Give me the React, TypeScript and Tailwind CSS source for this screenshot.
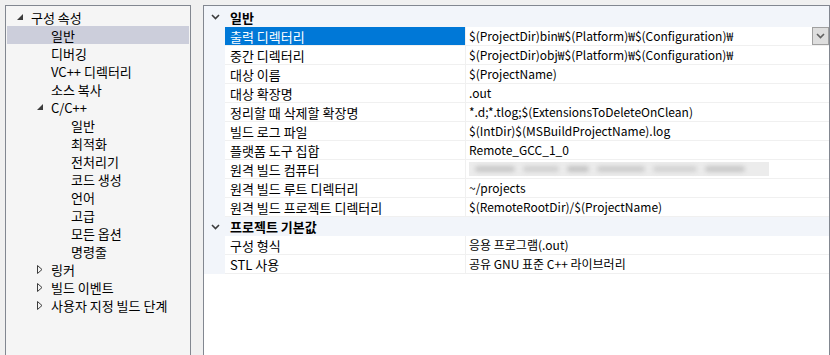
import React from "react";

const FONT = { fontFamily: '"Noto Sans CJK KR", "Noto Sans", sans-serif' };

function Expanded() {
  return (
    <svg width="6" height="6" viewBox="0 0 6 6" className="block">
      <polygon points="6,0 6,6 0,6" fill="#3c3c3c" />
    </svg>
  );
}

function Collapsed() {
  return (
    <svg width="6" height="9" viewBox="0 0 6 9" className="block">
      <polygon points="0.5,0.5 5,4.5 0.5,8.5" fill="none" stroke="#3c3c3c" strokeWidth="1" />
    </svg>
  );
}

type TreeItem = { label: string; level: number; arrow?: "open" | "closed"; selected?: boolean };

const tree: TreeItem[] = [
  { label: "구성 속성", level: 0, arrow: "open" },
  { label: "일반", level: 1, selected: true },
  { label: "디버깅", level: 1 },
  { label: "VC++ 디렉터리", level: 1 },
  { label: "소스 복사", level: 1 },
  { label: "C/C++", level: 1, arrow: "open" },
  { label: "일반", level: 2 },
  { label: "최적화", level: 2 },
  { label: "전처리기", level: 2 },
  { label: "코드 생성", level: 2 },
  { label: "언어", level: 2 },
  { label: "고급", level: 2 },
  { label: "모든 옵션", level: 2 },
  { label: "명령줄", level: 2 },
  { label: "링커", level: 1, arrow: "closed" },
  { label: "빌드 이벤트", level: 1, arrow: "closed" },
  { label: "사용자 지정 빌드 단계", level: 1, arrow: "closed" },
];

const padClass = ["pl-[6px]", "pl-[26px]", "pl-[46px]"];

type Row =
  | { kind: "header"; label: string; first?: boolean }
  | { kind: "row"; name: string; value?: string; selected?: boolean; blurred?: boolean };

const rows: Row[] = [
  { kind: "header", label: "일반", first: true },
  { kind: "row", name: "출력 디렉터리", value: "$(ProjectDir)bin₩$(Platform)₩$(Configuration)₩", selected: true },
  { kind: "row", name: "중간 디렉터리", value: "$(ProjectDir)obj₩$(Platform)₩$(Configuration)₩" },
  { kind: "row", name: "대상 이름", value: "$(ProjectName)" },
  { kind: "row", name: "대상 확장명", value: ".out" },
  { kind: "row", name: "정리할 때 삭제할 확장명", value: "*.d;*.tlog;$(ExtensionsToDeleteOnClean)" },
  { kind: "row", name: "빌드 로그 파일", value: "$(IntDir)$(MSBuildProjectName).log" },
  { kind: "row", name: "플랫폼 도구 집합", value: "Remote_GCC_1_0" },
  { kind: "row", name: "원격 빌드 컴퓨터", blurred: true },
  { kind: "row", name: "원격 빌드 루트 디렉터리", value: "~/projects" },
  { kind: "row", name: "원격 빌드 프로젝트 디렉터리", value: "$(RemoteRootDir)/$(ProjectName)" },
  { kind: "header", label: "프로젝트 기본값" },
  { kind: "row", name: "구성 형식", value: "응용 프로그램(.out)" },
  { kind: "row", name: "STL 사용", value: "공유 GNU 표준 C++ 라이브러리" },
];

function Chevron({ color = "#3c3c3c", w = 9 }: { color?: string; w?: number }) {
  return (
    <svg width={w} height="6" viewBox="0 0 9 6" className="block">
      <polyline points="1,1 4.5,4.5 8,1" fill="none" stroke={color} strokeWidth="1.6" />
    </svg>
  );
}

const blurBlocks = [
  { w: "w-[40px]", c: "bg-[#c8c8c8]" },
  { w: "w-[36px]", c: "bg-[#d0d0d0]" },
  { w: "w-[22px]", c: "bg-[#c4c4c4]" },
  { w: "w-[48px]", c: "bg-[#cccccc]" },
  { w: "w-[44px]", c: "bg-[#d2d2d2]" },
  { w: "w-[40px]", c: "bg-[#c8c8c8]" },
];

export default function App() {
  return (
    <div
      className="w-[830px] h-[355px] bg-[#f0f0f0] flex items-stretch pt-[5px] pl-[5px] overflow-hidden text-[12px] text-black leading-none"
      style={FONT}
    >
      {/* Left tree */}
      <div className="w-[186px] shrink-0 bg-[#f5f5f5] border-l border-t border-r border-[#828790] pt-[2px] text-[13px]">
        {tree.map((t, i) => (
          <div
            key={i}
            className={
              "h-[18px] flex items-center mx-[1px] " +
              padClass[t.level] +
              (t.selected ? " bg-[#cccedb]" : "")
            }
          >
            <div className="w-[18px] shrink-0 flex items-center justify-start pl-[4px]">
              {t.arrow === "open" ? <Expanded /> : t.arrow === "closed" ? <Collapsed /> : null}
            </div>
            <span className="whitespace-nowrap">{t.label}</span>
          </div>
        ))}
      </div>

      {/* Right property grid */}
      <div className="ml-[12px] w-[627px] shrink-0 bg-white border-l border-t border-r border-[#828790] flex">
        <div className="flex-1 flex flex-col">
          {rows.map((r, i) =>
            r.kind === "header" ? (
              <div
                key={i}
                className={
                  "flex items-center bg-[#f2f5fa] font-bold text-[13px] " + (r.first ? "h-[21px] pt-[1px]" : "h-[19px]")
                }
              >
                <div className="w-[21px] shrink-0 flex justify-center pl-[1px]">
                  <Chevron />
                </div>
                <span className="pl-[5px] whitespace-nowrap">{r.label}</span>
              </div>
            ) : (
              <div key={i} className="flex h-[19px]">
                <div className="w-[21px] shrink-0 bg-[#f2f5fa]" />
                <div className="flex-1 flex border-b border-[#f0f0f0]">
                  <div
                    className={
                      "w-[240px] shrink-0 flex items-center pl-[5px] whitespace-nowrap text-[13px] " +
                      (r.selected ? "bg-[#0078d7] text-white" : "")
                    }
                  >
                    {r.name}
                  </div>
                  <div className="w-px shrink-0 bg-[#f0f0f0]" />
                  <div className="flex-1 flex items-center pl-[3px] whitespace-nowrap">
                    {r.blurred ? (
                      <div className="w-[300px] h-[14px] bg-[#ececec] flex items-center gap-[8px] px-[6px]">
                        {blurBlocks.map((b, k) => (
                          <div key={k} className={"h-[6px] rounded-sm blur-[2px] " + b.w + " " + b.c} />
                        ))}
                      </div>
                    ) : (
                      <span className="flex-1">{r.value}</span>
                    )}
                    {r.selected ? (
                      <div className="w-[17px] h-[18px] shrink-0 bg-[#dedede] border border-[#a0a0a0] flex items-center justify-center">
                        <Chevron color="#606060" />
                      </div>
                    ) : null}
                  </div>
                </div>
              </div>
            )
          )}
        </div>
      </div>
    </div>
  );
}
